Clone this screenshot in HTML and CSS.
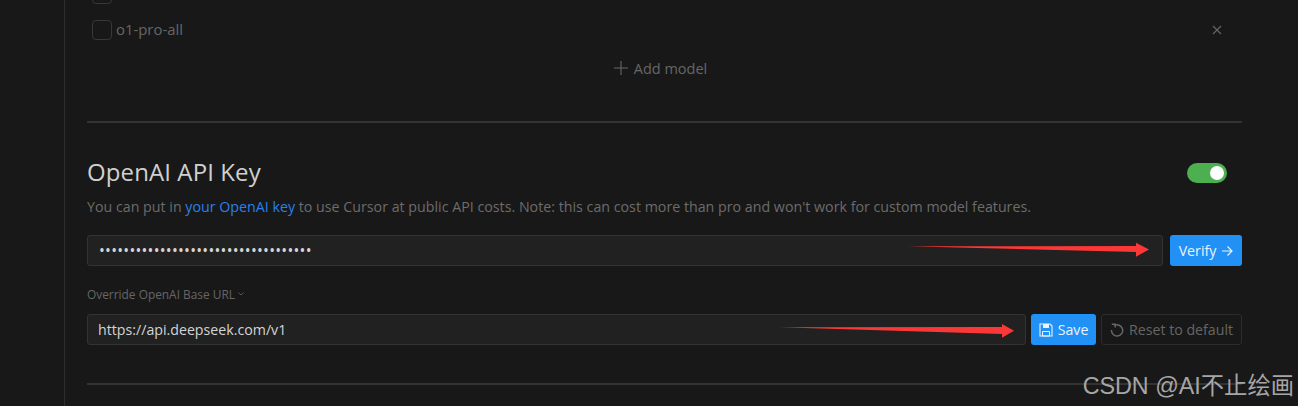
FILE: index.html
```html
<!DOCTYPE html>
<html lang="en">
<head>
    <meta charset="UTF-8">
    <meta name="viewport" content="width=device-width, initial-scale=1.0">
    <title>Cursor Settings</title>
    <link rel="stylesheet" href="styles.css">
</head>
<body>
    <div class="page">
        <div class="sidebar"></div>
        <main class="content">
            <div class="model-list">
                <div class="model-row"><span class="checkbox"></span></div>
                <div class="model-row">
                    <span class="checkbox"></span>
                    <span class="model-name">o1-pro-all</span>
                    <svg class="remove" width="10" height="10" viewBox="0 0 10 10"><path d="M1 1l8 8M9 1l-8 8" stroke="currentColor" stroke-width="1.1" fill="none"/></svg>
                </div>
            </div>
            <div class="add-model">
                <svg width="14" height="14" viewBox="0 0 14 14"><path d="M7 0v14M0 7h14" stroke="currentColor" stroke-width="1.1" fill="none"/></svg>
                <span>Add model</span>
            </div>
            <hr class="divider">

            <section class="key-section">
                <div class="key-header">
                    <h2>OpenAI API Key</h2>
                    <span class="toggle"><span class="knob"></span></span>
                </div>
                <p class="desc">You can put in <a href="#">your OpenAI key</a> to use Cursor at public API costs. Note: this can cost more than pro and won't work for custom model features.</p>
                <div class="field-row">
                    <div class="field dots">•••••••••••••••••••••••••••••••••••</div>
                    <button class="btn primary verify">Verify
                        <svg width="12" height="12" viewBox="0 0 12 12"><path d="M1 6h10M6.5 1.5L11 6l-4.500 4.500" stroke="currentColor" stroke-width="1.2" fill="none"/></svg>
                    </button>
                </div>
                <div class="override">Override OpenAI Base URL
                    <svg width="6" height="4" viewBox="0 0 6 4"><path d="M.5 .5L3 3l2.500-2.500" stroke="currentColor" stroke-width=".8" fill="none"/></svg>
                </div>
                <div class="field-row url-row">
                    <div class="field">https://api.deepseek.com/v1</div>
                    <button class="btn primary save">
                        <svg width="14" height="14" viewBox="0 0 14 14"><path d="M1 1h10l2 2v10H1z" stroke="currentColor" stroke-width="1.100" fill="none"/><path d="M4 1h6v4H4z" fill="currentColor"/><path d="M3.500 8.500h7V13h-7z" stroke="currentColor" stroke-width="1" fill="none"/></svg>
                        Save
                    </button>
                    <button class="btn reset">
                        <svg width="14" height="14" viewBox="0 0 14 14"><path d="M4.300 2.600A5.600 5.600 0 1 1 1.500 7" stroke="currentColor" stroke-width="1.500" fill="none"/><path d="M1.800 1.200h3.400v3.400" stroke="currentColor" stroke-width="1.400" fill="none"/></svg>
                        Reset to default
                    </button>
                </div>
            </section>
            <hr class="divider">
        </main>

        <!-- annotations on top of the screenshot -->
        <svg class="arrows" width="1298" height="406" viewBox="0 0 1298 406">
            <polygon points="907,246.300 1136,246 1136,242.700 1149,249.500 1136,256.700 1136,252" fill="#fa3838"/>
            <polygon points="780,327.300 1002,327 1002,324 1014,330.700 1002,337.700 1002,334" fill="#fa3838"/>
        </svg>
        <div class="watermark">CSDN @AI不止绘画</div>
    </div>
</body>
</html>
```

FILE: styles.css
```css
* {
    box-sizing: border-box;
}
html, body {
    margin: 0;
    padding: 0;
    height: 100%;
    overflow: hidden;
}
body {
    background-color: #181818;
    font-family: "Open Sans", "Noto Sans", sans-serif;
    color: #ccc;
}
.page {
    position: relative;
    display: flex;
    height: 406px;
    overflow: hidden;
}
.sidebar {
    width: 65px;
    flex: none;
    border-right: 1px solid #2e2e2e;
}
.content {
    width: 1155px;
    margin-left: 22px;
}
.model-list {
    margin-top: -16px;
}
.model-row {
    display: flex;
    align-items: center;
    height: 19px;
    margin-bottom: 17px;
    padding-left: 5px;
}
.checkbox {
    width: 20px;
    height: 20px;
    flex: none;
    border: 1px solid #383838;
    border-radius: 4px;
}
.model-name {
    margin: 0 0 2px 4px;
    font-size: 14.900px;
    font-weight: 500;
    color: #666;
}
.remove {
    margin-left: auto;
    margin-right: 20px;
    color: #666;
}
.add-model {
    display: flex;
    justify-content: center;
    align-items: center;
    gap: 6px;
    margin-top: 19px;
    padding-right: 8px;
    height: 20px;
    font-size: 14.500px;
    color: #666;
}
.divider {
    height: 2px;
    margin: 0;
    border: none;
    background: #333;
}
.add-model + .divider {
    margin-top: 43px;
}
.key-section {
    padding-top: 35px;
}
.key-header {
    display: flex;
    justify-content: space-between;
    align-items: center;
    height: 30px;
}
.key-header h2 {
    margin: 0 0 4px;
    font-size: 24px;
    font-weight: 400;
    color: #d0d0d0;
    letter-spacing: 0.1px;
}
.toggle {
    display: flex;
    align-items: center;
    justify-content: flex-end;
    width: 40px;
    height: 20px;
    margin-right: 15px;
    padding-right: 3px;
    background: #4caf50;
    border-radius: 10px;
}
.knob {
    width: 14px;
    height: 14px;
    background: #fff;
    border-radius: 50%;
}
.desc {
    margin: 9px 0 0;
    height: 20px;
    line-height: 20px;
    font-size: 14.240px;
    color: #6c6c6c;
    white-space: nowrap;
}
.desc a {
    color: #2a80ea;
    text-decoration: none;
}
.field-row {
    display: flex;
    gap: 7px;
    margin-top: 18px;
}
.field {
    flex: 1;
    height: 31px;
    padding-left: 10px;
    line-height: 29px;
    font-size: 14.200px;
    color: #d4d4d4;
    background: #212121;
    border: 1px solid #333;
    border-radius: 3px;
}
.dots {
    font-size: 15.500px;
    letter-spacing: 0.25px;
    padding-left: 11px;
}
.btn {
    display: flex;
    align-items: center;
    justify-content: center;
    gap: 5px;
    height: 31px;
    padding: 0;
    font-family: inherit;
    font-size: 14.200px;
    border: none;
    border-radius: 3px;
}
.primary {
    background: #2291f5;
    color: #e8f3ff;
}
.verify {
    width: 72px;
}
.override {
    display: flex;
    align-items: center;
    gap: 3px;
    height: 16px;
    margin-top: 20px;
    font-size: 11.900px;
    color: #666;
}
.url-row {
    gap: 5px;
    margin-top: 12px;
}
.save {
    width: 65px;
}
.reset {
    width: 141px;
    background: transparent;
    border: 1px solid #2c2c2c;
    color: #666;
}
.url-row + .divider, .key-section + .divider {
    margin-top: 38px;
}
.arrows {
    position: absolute;
    left: 0;
    top: 0;
    pointer-events: none;
}
.watermark {
    position: absolute;
    right: 4px;
    top: 367px;
    font-family: "Liberation Sans", "Noto Sans CJK SC", sans-serif;
    font-size: 23.300px;
    color: #a6a6a6;
}
```
